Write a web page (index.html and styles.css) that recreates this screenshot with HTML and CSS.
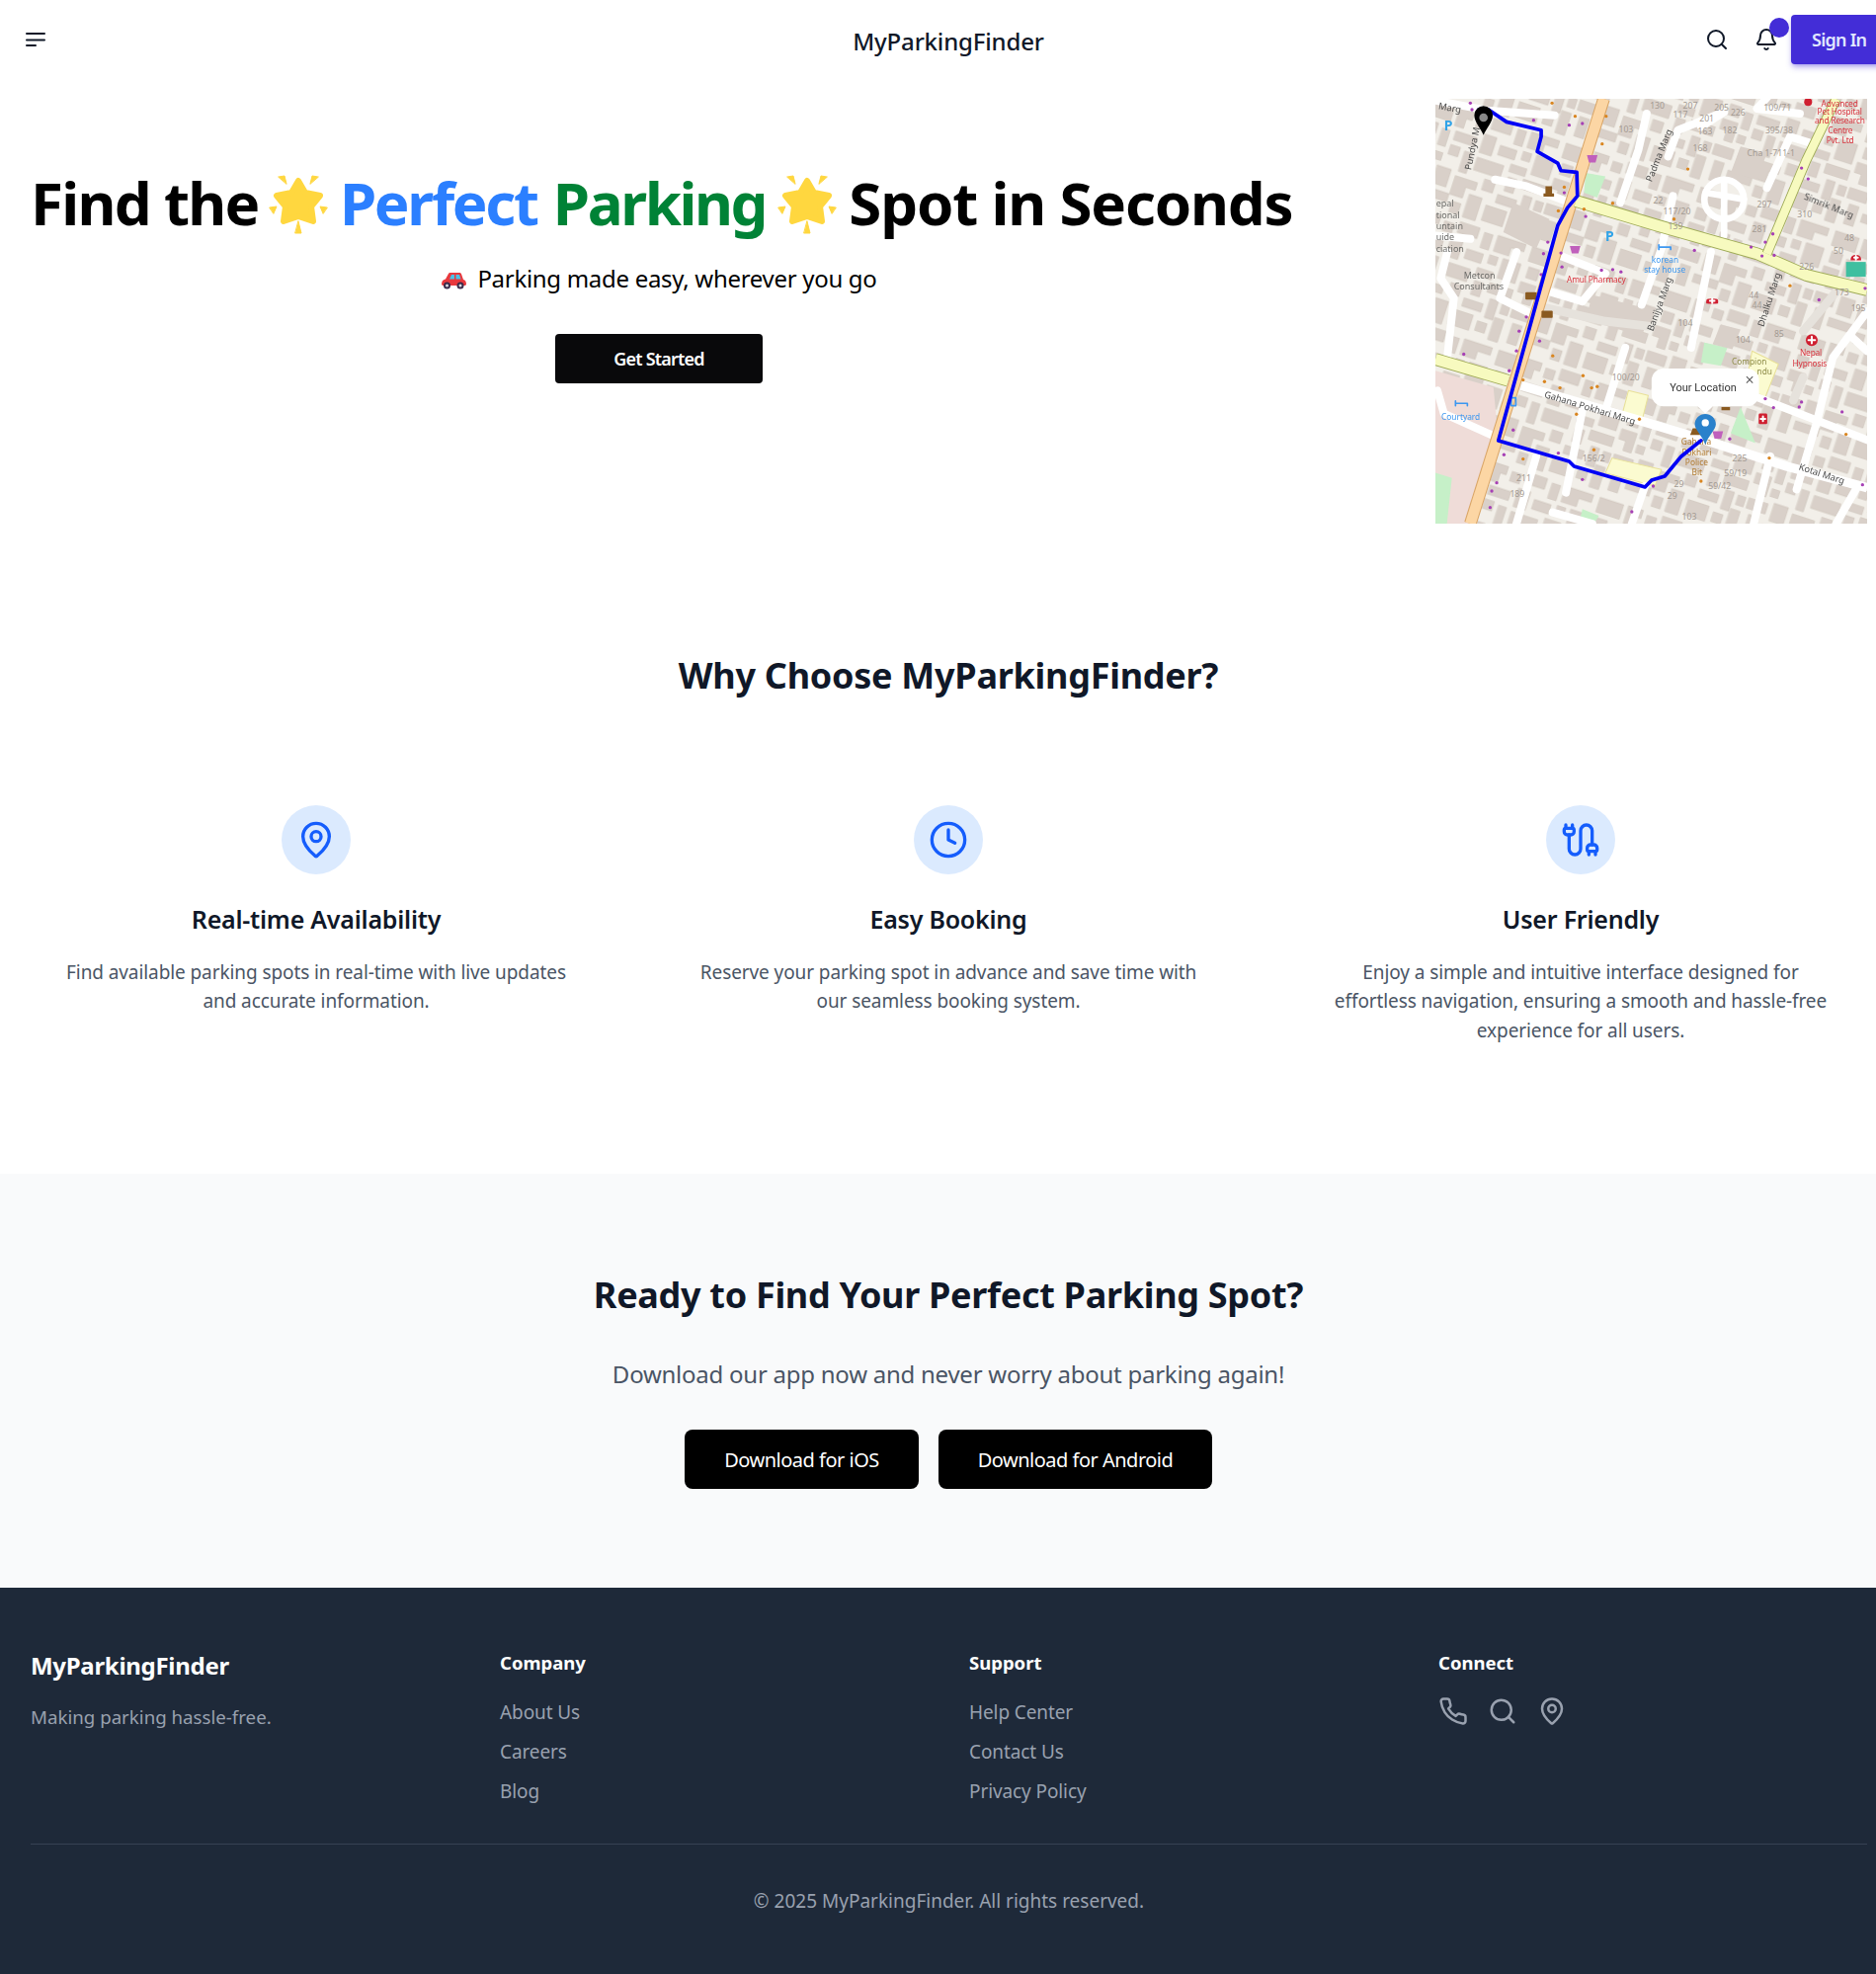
FILE: index.html
```html
<!DOCTYPE html>
<html lang="en">
<head>
<meta charset="utf-8">
<title>MyParkingFinder</title>
<link rel="stylesheet" href="styles.css">
</head>
<body>
<header class="topbar">
  <button class="icon-btn" aria-label="Menu">
    <svg class="ico-24" viewBox="0 0 24 24"><path d="M3 6h18M3 12.500h18M3 18h9"/></svg>
  </button>
  <div class="brand">MyParkingFinder</div>
  <div class="top-actions">
    <svg class="ico-24 ico-search" viewBox="0 0 24 24"><circle cx="11" cy="11" r="8"/><path d="m21 21-4.300-4.300"/></svg>
    <span class="bell-wrap">
      <svg class="ico-24" viewBox="0 0 24 24"><path d="M10.268 21a2 2 0 0 0 3.464 0"/><path d="M3.262 15.326A1 1 0 0 0 4 17h16a1 1 0 0 0 .74-1.673C19.410 13.956 18 12.499 18 8A6 6 0 0 0 6 8c0 4.499-1.411 5.956-2.738 7.326"/></svg>
      <span class="bell-dot"></span>
    </span>
    <button class="signin">Sign In</button>
  </div>
</header>

<section class="hero">
  <div class="hero-copy">
    <h1><span class="w-find">Find the</span> <svg class="star star-first" viewBox="0 0 60 60"><path class="star-body" d="M30 6 37 18 52 21 43 32 45 47 30 42 15 47 17 32 8 21 23 18Z"/><path class="star-ray" d="M10 2l6-1 2 8zM50 2l-6-1-2 8zM1 33l7-1-3 7zM59 33l-7-1 3 7zM30 47l3 12h-6z"/></svg> <span class="blue">Perfect</span> <span class="green">Parking</span> <svg class="star" viewBox="0 0 60 60"><path class="star-body" d="M30 6 37 18 52 21 43 32 45 47 30 42 15 47 17 32 8 21 23 18Z"/><path class="star-ray" d="M10 2l6-1 2 8zM50 2l-6-1-2 8zM1 33l7-1-3 7zM59 33l-7-1 3 7zM30 47l3 12h-6z"/></svg> <span class="w-spot">Spot in Seconds</span></h1>
    <p class="hero-sub"><svg class="car" viewBox="0 0 26 18"><path class="car-body" d="M1 13c0-3 1-5 4-5.500L8 2c.4-.8 1-1 2-1h9c1 0 1.500.4 2 1.200L23 8c2 .5 3 2 3 5l-1 1H2z"/><path class="car-glass" d="M9 7.500 11 3h3v4.500zM15.500 3H19l1.500 4.500h-5z"/><circle class="car-tire" cx="6.500" cy="14" r="3.500"/><circle class="car-tire" cx="20" cy="14" r="3.500"/><circle class="car-hub" cx="6.500" cy="14" r="1.500"/><circle class="car-hub" cx="20" cy="14" r="1.500"/></svg> Parking made easy, wherever you go</p>
    <button class="btn-start">Get Started</button>
  </div>

  <svg class="map" viewBox="24 15 1310 1289" role="img" aria-label="Street map with route">
    <defs>
      <pattern id="blocks" width="430" height="330" patternUnits="userSpaceOnUse" patternTransform="rotate(18) translate(12 6)">
        <rect x="6" y="6" width="74" height="46"/>
        <path d="M96 4h46v26h-18v30H96z"/>
        <rect x="158" y="14" width="30" height="30"/>
        <rect x="204" y="2" width="62" height="34"/>
        <rect x="284" y="10" width="26" height="48"/>
        <path d="M326 6h88v24h-40v26h-48z"/>
        <rect x="14" y="68" width="34" height="34"/>
        <rect x="64" y="78" width="24" height="52"/>
        <rect x="106" y="74" width="66" height="28"/>
        <rect x="192" y="56" width="38" height="58"/>
        <rect x="248" y="74" width="52" height="30"/>
        <rect x="320" y="70" width="26" height="26"/>
        <rect x="362" y="68" width="56" height="62"/>
        <path d="M4 118h48v62H26v-30H4z"/>
        <rect x="104" y="118" width="30" height="30"/>
        <rect x="150" y="124" width="24" height="64"/>
        <rect x="192" y="130" width="84" height="40"/>
        <rect x="296" y="118" width="50" height="24"/>
        <rect x="64" y="150" width="24" height="24"/>
        <rect x="300" y="158" width="28" height="44"/>
        <rect x="346" y="150" width="74" height="30"/>
        <rect x="6" y="198" width="60" height="32"/>
        <rect x="84" y="190" width="44" height="56"/>
        <path d="M146 204h70v24h-30v34h-40z"/>
        <rect x="234" y="186" width="34" height="34"/>
        <rect x="286" y="218" width="60" height="26"/>
        <rect x="362" y="196" width="26" height="60"/>
        <rect x="402" y="200" width="24" height="30"/>
        <rect x="20" y="246" width="30" height="62"/>
        <rect x="68" y="262" width="76" height="26"/>
        <rect x="204" y="244" width="40" height="72"/>
        <rect x="160" y="280" width="28" height="34"/>
        <rect x="262" y="260" width="66" height="48"/>
        <rect x="346" y="272" width="30" height="30"/>
        <rect x="392" y="246" width="30" height="70"/>
      </pattern>
    </defs>
    <rect class="m-land" x="24" y="15" width="1310" height="1289"/>
    <rect class="m-blocks" x="24" y="15" width="1310" height="1289"/>
    <path class="m-pink" d="M24 840 200 890 215 1050 150 1304H24Z"/>
    <path class="m-green" d="M480 240l60 10-25 65-40-15zM840 755l70 15-20 55-60-10zM950 950l45 110-75-30zM470 1260l50 20-15 25h-45zM24 1150l50 15-15 139H24z"/>
    <path class="m-yel" d="M985 780l80 40-40 100-60-30zM610 900l60 15-20 80-60-20zM560 1105l150 35-20 50-150-40z"/>
    <path class="m-hall" d="M500 610l180 45-30 80-170-50zM260 330l110 50-40 90-100-50zM890 700l60 15-25 60-60-15zM1030 180l-30 80-80-20 30-80z"/>

    <g class="m-street">
      <path d="M24 20 180 50 385 65"/>
      <path d="M205 260 300 280 420 325"/>
      <path d="M665 60 640 170 585 330"/>
      <path d="M745 310 710 470 650 640"/>
      <path d="M860 480 800 770"/>
      <path d="M1165 150 1100 130 1030 285"/>
      <path d="M60 480 40 560 80 620 60 800"/>
      <path d="M270 480 220 620 320 670"/>
      <path d="M370 600 470 630 540 545 400 490"/>
      <path d="M600 770 540 960"/>
      <path d="M470 960 420 1210"/>
      <path d="M30 900 50 970 205 1040"/>
      <path d="M1334 660 1230 800 1180 1000 1120 1200"/>
      <path d="M1000 920 1334 1050"/>
      <path d="M660 1190 620 1304"/>
      <path d="M330 1100 270 1304"/>
      <path d="M1040 1100 990 1304"/>
      <path d="M1300 1200 1240 1304"/>
      <path d="M380 1270 500 1304"/>
      <path d="M1040 0 1000 45 1130 60"/>
      <path d="M830 100 900 55 760 110 730 190"/>
      <path d="M24 430 130 440"/>
      <path d="M1290 740 1334 780"/>
    </g>
    <g class="m-ring">
      <circle cx="900" cy="320" r="60"/>
      <path d="M900 260V430M845 300 960 320"/>
    </g>
    <path class="m-stip" d="M360 650 540 690 670 705M1240 600 1140 720M1140 860 1110 930"/>

    <path class="m-main-case" d="M535 15 130 1304"/>
    <path class="m-main" d="M535 15 130 1304"/>
    <path class="m-yc" d="M450 325 700 400 1000 485 1150 550 1334 595"/>
    <path class="m-y" d="M450 325 700 400 1000 485 1150 550 1334 595"/>
    <path class="m-yc2" d="M1240 15 1150 200 1030 485"/>
    <path class="m-y2" d="M1240 15 1150 200 1030 485"/>
    <path class="m-yc" d="M24 805 245 870"/>
    <path class="m-y" d="M24 805 245 870"/>
    <path class="m-road" d="M285 885 640 990 840 1050 1090 1130 1334 1195"/>

    <g class="m-dots-p">
      <circle cx="130" cy="28" r="5"/><circle cx="135" cy="48" r="5"/><circle cx="322" cy="80" r="5"/><circle cx="430" cy="95" r="5"/><circle cx="470" cy="90" r="5"/><circle cx="415" cy="300" r="5"/><circle cx="480" cy="372" r="5"/><circle cx="405" cy="483" r="5"/><circle cx="408" cy="525" r="5"/><circle cx="365" cy="450" r="5"/><circle cx="352" cy="485" r="5"/><circle cx="345" cy="548" r="5"/><circle cx="300" cy="677" r="5"/><circle cx="278" cy="720" r="5"/><circle cx="340" cy="750" r="5"/><circle cx="270" cy="780" r="5"/><circle cx="248" cy="840" r="5"/><circle cx="110" cy="790" r="5"/><circle cx="1135" cy="225" r="5"/><circle cx="1155" cy="258" r="5"/><circle cx="1048" cy="425" r="5"/><circle cx="1025" cy="450" r="5"/><circle cx="1015" cy="492" r="5"/><circle cx="1052" cy="490" r="5"/><circle cx="982" cy="465" r="5"/><circle cx="810" cy="475" r="5"/><circle cx="528" cy="535" r="5"/><circle cx="562" cy="533" r="5"/><circle cx="587" cy="540" r="5"/><circle cx="1188" cy="625" r="5"/><circle cx="1328" cy="590" r="5"/><circle cx="1025" cy="925" r="5"/><circle cx="1050" cy="952" r="5"/><circle cx="1135" cy="935" r="5"/><circle cx="1128" cy="950" r="5"/><circle cx="1258" cy="965" r="5"/><circle cx="917" cy="1047" r="5"/><circle cx="1320" cy="1186" r="5"/><circle cx="685" cy="1190" r="5"/><circle cx="470" cy="1170" r="5"/><circle cx="397" cy="1090" r="5"/><circle cx="232" cy="1095" r="5"/><circle cx="260" cy="1020" r="5"/><circle cx="210" cy="1180" r="5"/><circle cx="195" cy="1205" r="5"/><circle cx="190" cy="1255" r="5"/><circle cx="620" cy="1268" r="5"/>
    </g>
    <g class="m-dots-o">
      <circle cx="378" cy="28" r="5"/><circle cx="448" cy="68" r="5"/><circle cx="530" cy="152" r="5"/><circle cx="542" cy="68" r="5"/><circle cx="790" cy="228" r="5"/><circle cx="415" cy="283" r="5"/><circle cx="562" cy="332" r="5"/><circle cx="475" cy="350" r="5"/><circle cx="748" cy="380" r="5"/><circle cx="397" cy="355" r="5"/><circle cx="380" cy="795" r="5"/><circle cx="290" cy="868" r="5"/><circle cx="355" cy="873" r="5"/><circle cx="402" cy="892" r="5"/><circle cx="472" cy="855" r="5"/><circle cx="498" cy="892" r="5"/><circle cx="515" cy="888" r="5"/><circle cx="452" cy="972" r="5"/><circle cx="643" cy="987" r="5"/><circle cx="505" cy="1080" r="5"/><circle cx="290" cy="1108" r="5"/><circle cx="1100" cy="582" r="5"/><circle cx="1037" cy="1105" r="5"/><circle cx="1270" cy="1033" r="5"/><circle cx="830" cy="1175" r="5"/>
    </g>

    <g class="t-house">
      <text x="1020" y="52">109/71</text><text x="675" y="44">130</text><text x="775" y="44">207</text><text x="870" y="50">205</text><text x="745" y="72">117</text><text x="825" y="85">201</text><text x="820" y="122">163</text><text x="895" y="120">182</text><text x="920" y="65">226</text><text x="1025" y="120">395/38</text><text x="580" y="118">103</text><text x="805" y="175">168</text><text x="970" y="190">Cha 1-711-1</text><text x="685" y="333">22</text><text x="715" y="365">117/20</text><text x="730" y="412">139</text><text x="1000" y="345">297</text><text x="985" y="420">281</text><text x="1122" y="375">310</text><text x="1265" y="447">48</text><text x="1232" y="487">50</text><text x="1128" y="535">226</text><text x="1235" y="612">173</text><text x="1285" y="660">195</text><text x="975" y="620">44</text><text x="985" y="650">44</text><text x="1052" y="738">85</text><text x="760" y="705">104</text><text x="935" y="755">104</text><text x="560" y="868">100/20</text><text x="470" y="1115">156/2</text><text x="925" y="1115">225</text><text x="900" y="1160">59/19</text><text x="852" y="1198">59/42</text><text x="748" y="1192">29</text><text x="728" y="1230">29</text><text x="270" y="1175">211</text><text x="250" y="1222">189</text><text x="772" y="1292">103</text>
    </g>
    <g class="t-street">
      <text x="32" y="46" transform="rotate(10 32 46)">Marg</text>
      <text x="132" y="232" transform="rotate(-78 132 232)">Pundya M</text>
      <text x="680" y="268" transform="rotate(-68 680 268)">Padma Marg</text>
      <text x="684" y="722" transform="rotate(-70 684 722)">Banijya Marg</text>
      <text x="1020" y="708" transform="rotate(-72 1020 708)">Dhalku Marg</text>
      <text x="1140" y="320" transform="rotate(22 1140 320)">Simrik Marg</text>
      <text x="353" y="920" transform="rotate(17 353 920)">Gahana Pokhari Marg</text>
      <text x="1125" y="1140" transform="rotate(18 1125 1140)">Kotal Marg</text>
    </g>
    <g class="t-gray">
      <text x="26" y="343">epal</text><text x="26" y="377">tional</text><text x="26" y="410">untain</text><text x="26" y="445">uide</text><text x="26" y="479">ciation</text><text x="110" y="560">Metcon</text><text x="80" y="595">Consultants</text>
    </g>
    <g class="t-red">
      <text x="423" y="574">Amul Pharmacy</text>
      <text x="1130" y="795">Nepal</text><text x="1108" y="827">Hypnosis</text>
      <text x="1195" y="38">Advanced</text><text x="1183" y="62">Pet Hospital</text><text x="1175" y="89">and Research</text><text x="1215" y="120">Centre</text><text x="1210" y="150">Pvt. Ltd</text>
    </g>
    <g class="t-blue">
      <text x="680" y="512">korean</text><text x="657" y="543">stay house</text><text x="42" y="990">Courtyard</text>
    </g>
    <g class="t-olive"><text x="923" y="820">Compion</text><text x="1000" y="850">ndu</text></g>
    <g class="t-brown"><text x="770" y="1065">Gahana</text><text x="772" y="1096">Pokhari</text><text x="782" y="1127">Police</text><text x="802" y="1158">Bit</text></g>
    <g class="t-p"><text x="50" y="110">P</text><text x="540" y="447">P</text></g>

    <g class="m-poi-red">
      <path d="M846 636c0-10 8-14 18-14s18 4 18 14H846z"/><rect x="846" y="622" width="36" height="14" rx="6"/>
      <path d="M1284 505c0-12 6-16 16-16s16 4 16 16h-32z"/>
      <circle cx="1166" cy="747" r="18"/>
      <rect x="1005" y="970" width="26" height="32" rx="4"/>
      <circle cx="1155" cy="25" r="12"/>
    </g>
    <path class="m-poi-cross" d="M864 621v14M857 628h14M1300 492v11M1295 497h11M1166 737v20M1156 747h20M1018 979v14M1011 986h14"/>
    <g class="m-poi-pur">
      <path d="M432 462h32l-6 22h-20zM484 186h32l-6 22h-20zM865 1024h32l-6 22h-20z"/>
    </g>
    <g class="m-poi-brown">
      <rect x="297" y="602" width="34" height="22" rx="3"/><rect x="346" y="658" width="34" height="22" rx="3"/><path d="M358 280h20v22h6v10h-32v-10h6zM805 1015h22l10 20h-40zM892 950h26v10h-26z"/>
    </g>
    <path class="m-poi-blue" d="M702 458v14M702 465h36v7M85 932v14M85 939h36v7M254 922h14v24h-14z"/>
    <path class="m-poi-teal" d="M1270 510h60v45h-60z"/>

    <path class="m-route" d="M155 48 185 48 240 85 345 110 345 130 333 175 395 210 405 233 453 238 455 310 425 345 395 400 215 1052 430 1115 445 1130 660 1193 680 1172 720 1160 770 1100 830 1052"/>

    <path class="pin-black" d="M170 125c-8-20-28-40-28-60a28 28 0 0 1 56 0c0 20-20 40-28 60z"/>
    <circle class="pin-black-dot" cx="170" cy="72" r="13"/>
    <path class="pin-blue" d="M843 1065c-8-26-32-46-32-62a32 32 0 0 1 64 0c0 16-24 36-32 62z"/>
    <circle class="pin-white" cx="843" cy="998" r="11"/>

    <path class="pop-box" d="M716 833H970a36 36 0 0 1 36 36V912a36 36 0 0 1-36 36H866L843 970 820 948H716a36 36 0 0 1-36-36V869a36 36 0 0 1 36-36z"/>
    <text class="pop-text" x="735" y="901">Your Location</text>
    <path class="pop-x" d="M968 858 987 877M987 858 968 877"/>
  </svg>
</section>

<section class="why">
  <h2 class="why-title">Why Choose MyParkingFinder?</h2>
  <div class="why-grid">
    <article class="why-card">
      <div class="why-icon"><svg class="ico-40" viewBox="0 0 24 24"><path d="M20 10c0 4.993-5.539 10.193-7.399 11.799a1 1 0 0 1-1.202 0C9.539 20.193 4 14.993 4 10a8 8 0 0 1 16 0"/><circle cx="12" cy="10" r="3"/></svg></div>
      <h3>Real-time Availability</h3>
      <p>Find available parking spots in real-time with live updates and accurate information.</p>
    </article>
    <article class="why-card">
      <div class="why-icon"><svg class="ico-40" viewBox="0 0 24 24"><circle cx="12" cy="12" r="10"/><path d="M12 6v6l4 2"/></svg></div>
      <h3>Easy Booking</h3>
      <p>Reserve your parking spot in advance and save time with our seamless booking system.</p>
    </article>
    <article class="why-card">
      <div class="why-icon"><svg class="ico-40" viewBox="0 0 24 24"><path d="M17 21v-2a1 1 0 0 1-1-1v-1a2 2 0 0 1 2-2h2a2 2 0 0 1 2 2v1a1 1 0 0 1-1 1"/><path d="M19 15V6.500a1 1 0 0 0-7 0v11a1 1 0 0 1-7 0V9"/><path d="M21 21v-2h-4"/><path d="M3 5V3"/><path d="M7 5V3"/><path d="M7 5a1 1 0 0 1 1 1v1a2 2 0 0 1-2 2H4a2 2 0 0 1-2-2V6a1 1 0 0 1 1-1z"/></svg></div>
      <h3>User Friendly</h3>
      <p>Enjoy a simple and intuitive interface designed for effortless navigation, ensuring a smooth and hassle-free experience for all users.</p>
    </article>
  </div>
</section>

<section class="cta">
  <h2 class="cta-title">Ready to Find Your Perfect Parking Spot?</h2>
  <p class="cta-sub">Download our app now and never worry about parking again!</p>
  <div class="cta-btns">
    <button class="btn-dl btn-ios">Download for iOS</button>
    <button class="btn-dl btn-android">Download for Android</button>
  </div>
</section>

<footer class="footer">
  <div class="foot-grid">
    <div>
      <h3 class="foot-brand">MyParkingFinder</h3>
      <p class="foot-tag">Making parking hassle-free.</p>
    </div>
    <div>
      <h4>Company</h4>
      <ul><li>About Us</li><li>Careers</li><li>Blog</li></ul>
    </div>
    <div>
      <h4>Support</h4>
      <ul><li>Help Center</li><li>Contact Us</li><li>Privacy Policy</li></ul>
    </div>
    <div>
      <h4>Connect</h4>
      <div class="foot-icons">
        <svg class="ico-30" viewBox="0 0 24 24"><path d="M22 16.920v3a2 2 0 0 1-2.180 2 19.790 19.790 0 0 1-8.630-3.070 19.500 19.500 0 0 1-6-6 19.790 19.790 0 0 1-3.070-8.670A2 2 0 0 1 4.110 2h3a2 2 0 0 1 2 1.720 12.840 12.840 0 0 0 .7 2.810 2 2 0 0 1-.45 2.110L8.090 9.910a16 16 0 0 0 6 6l1.270-1.270a2 2 0 0 1 2.110-.45 12.840 12.840 0 0 0 2.810.7A2 2 0 0 1 22 16.920z"/></svg>
        <svg class="ico-30" viewBox="0 0 24 24"><circle cx="11" cy="11" r="8"/><path d="m21 21-4.300-4.300"/></svg>
        <svg class="ico-30" viewBox="0 0 24 24"><path d="M20 10c0 4.993-5.539 10.193-7.399 11.799a1 1 0 0 1-1.202 0C9.539 20.193 4 14.993 4 10a8 8 0 0 1 16 0"/><circle cx="12" cy="10" r="3"/></svg>
      </div>
    </div>
  </div>
  <p class="copyright">© 2025 MyParkingFinder. All rights reserved.</p>
</footer>
</body>
</html>
```

FILE: styles.css
```css
* { box-sizing: border-box; }
html { margin: 0; padding: 0; overflow-x: hidden; }
body { margin: 0; padding: 0; width: 1920px; font-family: "Noto Sans", "Open Sans", sans-serif; color: #101828; background: #fff; }
h1, h2, h3, h4, p, ul { margin: 0; padding: 0; }
button { font-family: inherit; border: 0; cursor: pointer; }
svg { fill: none; stroke: currentColor; stroke-width: 2; stroke-linecap: round; stroke-linejoin: round; }

.ico-24 { width: 24px; height: 24px; display: block; }
.ico-30 { width: 30px; height: 30px; display: block; }
.ico-40 { width: 40px; height: 40px; display: block; }

.topbar { height: 80px; display: grid; grid-template-columns: 1fr auto 1fr; align-items: center; padding-left: 24px; padding-right: 10px; }
.icon-btn { background: none; padding: 0; width: 24px; height: 24px; color: #101828; justify-self: start; }
.brand { font-size: 24px; font-weight: 500; color: #101828; letter-spacing: -0.17px; margin-top: 2px; margin-right: 14px; }
.top-actions { justify-self: end; display: flex; align-items: center; color: #101828; }
.ico-search { margin-right: 26px; }
.bell-wrap { position: relative; display: block; margin-right: 13px; }
.bell-dot { position: absolute; width: 20px; height: 20px; border-radius: 50%; background: #432dd7; top: -10px; right: -11px; }
.signin { width: 97px; height: 50px; background: #432dd7; color: #e0e7ff; font-size: 18px; font-weight: 600; border-radius: 4px; letter-spacing: -0.75px; box-shadow: 0 4px 6px -1px rgba(67,45,215,.35), 0 2px 4px -2px rgba(67,45,215,.35); text-align: left; padding: 0 0 0 21px; }

.hero { display: flex; align-items: flex-start; justify-content: space-between; padding: 20px 30px 0 31px; height: 450px; }
.hero-copy { width: 1272px; text-align: center; padding-top: 72px; }
.hero-copy h1 { font-size: 60px; line-height: 66px; font-weight: 700; color: #000; white-space: nowrap; letter-spacing: -1.500px; }
.w-find { letter-spacing: -1.700px; }
.w-spot { letter-spacing: -1.200px; }
.star { width: 60px; height: 60px; vertical-align: -9px; stroke: none; margin: 0 -2px; }
.star-first { margin-left: -4px; }
.star-body { fill: #ffd73f; stroke: #ffd73f; stroke-width: 6; }
.star-ray { fill: #ffd73f; stroke: #ffd73f; stroke-width: 1; }
.blue { color: #2b7fff; letter-spacing: -2.300px; }
.green { color: #008236; letter-spacing: -2.400px; margin-left: 2px; }
.hero-sub { font-size: 24px; line-height: 32px; color: #000; margin-top: 28px; letter-spacing: -0.3px; }
.car { width: 26px; height: 18px; vertical-align: -2px; stroke: none; margin-right: 5px; }
.car-body { fill: #e8383d; }
.car-glass { fill: #4ac3e8; }
.car-tire { fill: #3a2a4a; }
.car-hub { fill: #d8d8e0; }
.btn-start { display: block; margin: 39.500px auto 0; width: 210px; height: 50px; background: #09090b; color: #fff; font-size: 18px; font-weight: 600; border-radius: 4px; letter-spacing: -0.8px; }

.map { width: 437px; height: 430px; display: block; flex: none; stroke: none; filter: blur(0.5px); }
.map text { stroke: none; font-family: "Noto Sans", sans-serif; }
.m-land { fill: #f2efe9; }
.m-blocks { fill: url(#blocks); }
#blocks rect, #blocks path { fill: #d9d0c9; stroke: #c6bcb3; stroke-width: 1.500; }
.m-pink { fill: #efdcd8; }
.m-green { fill: #c6f0c8; }
.m-yel { fill: #fbfbd0; stroke: #e8e098; stroke-width: 3; }
.m-hall { fill: #d9d0c9; }
.m-street path { fill: none; stroke: #fff; stroke-width: 24; stroke-linecap: round; stroke-linejoin: round; }
.m-ring circle, .m-ring path { fill: none; stroke: #fff; stroke-width: 20; }
.m-stip { fill: none; stroke: #e6e2dc; stroke-width: 26; stroke-linecap: round; stroke-linejoin: round; }
.m-main-case { stroke: #d9a566; stroke-width: 38; fill: none; stroke-linecap: butt; }
.m-main { stroke: #fcd6a4; stroke-width: 32; fill: none; stroke-linecap: butt; }
.m-yc { stroke: #9eaa55; stroke-width: 38; fill: none; stroke-linecap: butt; }
.m-y { stroke: #f7fabf; stroke-width: 33; fill: none; stroke-linecap: butt; }
.m-yc2 { stroke: #9eaa55; stroke-width: 30; fill: none; stroke-linecap: butt; }
.m-y2 { stroke: #f7fabf; stroke-width: 25; fill: none; stroke-linecap: butt; }
.m-road { stroke: #fff; stroke-width: 28; fill: none; stroke-linecap: butt; }
.m-dots-p circle { fill: #a640b5; }
.m-dots-o circle { fill: #d9851f; }
.t-house text { font-size: 26px; fill: #a39a92; }
.t-street text { font-size: 28px; fill: #4a4a4a; }
.t-gray text { font-size: 27px; fill: #6b6b68; }
.t-red text { font-size: 25px; fill: #d8333e; letter-spacing: -0.5px; }
.t-blue text { font-size: 25px; fill: #3c97f0; }
.t-olive text { font-size: 25px; fill: #8e8c48; }
.t-brown text { font-size: 25px; fill: #b07a30; }
.t-p text { font-size: 42px; fill: #2fa3e8; font-weight: 700; }
.m-poi-red rect, .m-poi-red circle, .m-poi-red path { fill: #cf1f30; }
.m-poi-cross { fill: none; stroke: #fff; stroke-width: 6; }
.m-poi-pur path { fill: #c060bc; }
.m-poi-brown rect, .m-poi-brown path { fill: #8a5a20; }
.m-poi-blue { fill: none; stroke: #3c97f0; stroke-width: 5; }
.m-poi-teal { fill: #3fbfa0; }
.m-route { fill: none; stroke: #0000f5; stroke-width: 11; stroke-linejoin: round; stroke-linecap: round; }
.pin-black { fill: #000; }
.pin-black-dot { fill: #8a8a8a; }
.pin-blue { fill: #2a81cb; }
.pin-white { fill: #fff; }
.pop-box { fill: #fff; }
.map .pop-text { font-family: "Roboto", sans-serif; font-size: 33px; fill: #333; }
.pop-x { fill: none; stroke: #555; stroke-width: 3; stroke-linecap: butt; }

.why { padding-top: 130px; height: 658px; }
.why-title { font-size: 36px; line-height: 48px; font-weight: 700; text-align: center; letter-spacing: -0.27px; }
.why-grid { display: grid; grid-template-columns: repeat(3, 576px); gap: 64px; justify-content: center; margin-top: 107px; }
.why-card { text-align: center; padding: 0 32px; display: flex; flex-direction: column; align-items: center; }
.why-icon { width: 70px; height: 70px; border-radius: 50%; background: #dbeafe; color: #155dfc; display: flex; align-items: center; justify-content: center; }
.why-card h3 { font-size: 25px; line-height: 32px; font-weight: 600; margin-top: 29px; letter-spacing: -0.23px; }
.why-card p { font-size: 19px; line-height: 29.500px; color: #4a5565; margin-top: 23.500px; letter-spacing: -0.09px; }

.cta { height: 419px; background: #f9fafb; text-align: center; padding-top: 99px; }
.cta-title { font-size: 36px; line-height: 48px; font-weight: 700; letter-spacing: -0.3px; }
.cta-sub { font-size: 24px; line-height: 32px; color: #4a5565; margin-top: 40px; letter-spacing: -0.25px; }
.cta-btns { display: flex; justify-content: center; gap: 20px; margin-top: 40px; }
.btn-dl { height: 60px; background: #000; color: #fff; font-size: 20px; border-radius: 8px; letter-spacing: -0.5px; }
.btn-ios { width: 237px; }
.btn-android { width: 277px; }

.footer { height: 391px; background: #1e2939; padding: 60px 30px 0 31px; color: #fff; }
.foot-grid { display: grid; grid-template-columns: repeat(3, 475px) 1fr; height: 200px; border-bottom: 1px solid #364153; }
.foot-brand { font-size: 24px; line-height: 32px; font-weight: 700; letter-spacing: -0.3px; margin-top: 3px; }
.foot-tag { font-size: 18.700px; line-height: 28px; color: #99a1af; margin-top: 22px; }
.footer h4 { font-size: 18.500px; line-height: 28px; font-weight: 700; margin-top: 2px; }
.footer ul { list-style: none; margin-top: 22px; }
.footer li { font-size: 19px; line-height: 28px; color: #99a1af; margin-bottom: 12px; letter-spacing: -0.1px; }
.foot-icons { display: flex; gap: 20px; color: #99a1af; margin-top: 20px; }
.copyright { text-align: center; font-size: 19px; line-height: 28px; color: #99a1af; margin-top: 43px; }
```
